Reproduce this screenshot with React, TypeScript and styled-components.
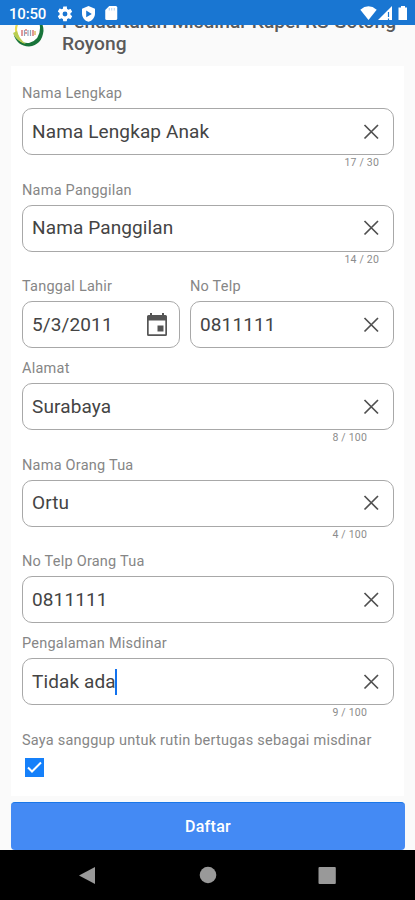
import React from "react";
import styled, { createGlobalStyle } from "styled-components";

const GlobalStyle = createGlobalStyle`
  * { box-sizing: border-box; }
  body { margin: 0; background: #fafafa; font-family: Roboto, "Liberation Sans", sans-serif; }
`;

const Screen = styled.div`
  display: flex;
  flex-direction: column;
  width: 415px;
  height: 900px;
  overflow: hidden;
  background: #fafafa;
`;

const StatusBar = styled.header`
  display: flex;
  flex: none;
  align-items: center;
  justify-content: space-between;
  height: 25px;
  padding: 2px 6px 0 9px;
  background: #1976d2;
  color: #fff;
`;

const StatusGroup = styled.div<{ $gap: number }>`
  display: flex;
  align-items: center;
  gap: ${(p) => p.$gap}px;
  svg { display: block; }
`;

const Clock = styled.span`
  width: 40px;
  font-size: 15px;
  line-height: 20px;
  letter-spacing: -0.2px;
  font-weight: 500;
  white-space: nowrap;
`;

const Heading = styled.div`
  display: flex;
  flex: none;
  align-items: flex-end;
  height: 41px;
  padding: 0 10px 11px 12px;
  overflow: hidden;
`;

const Logo = styled.svg`
  flex: none;
  width: 33px;
  height: 34px;
  margin: 0 17px 8px 0;
`;

const Title = styled.h1`
  margin: 0;
  color: #5a5a5a;
  font-size: 19.2px;
  font-weight: 500;
  line-height: 22px;
  white-space: nowrap;
`;

const Card = styled.main`
  flex: none;
  height: 730px;
  margin: 0 11px;
  padding: 19px 10px 0 11px;
  background: #fff;
`;

const FieldBlock = styled.div<{ $counted?: boolean }>`
  height: ${(p) => (p.$counted ? 96.5 : 82)}px;
`;

const Split = styled.div`
  display: grid;
  grid-template-columns: 158px 1fr;
  gap: 10px;
`;

const Label = styled.label`
  display: block;
  height: 23px;
  color: #868686;
  font-size: 14.5px;
  line-height: 18px;
  letter-spacing: 0.23px;
  white-space: nowrap;
`;

const InputBox = styled.div<{ $date?: boolean }>`
  display: flex;
  align-items: center;
  justify-content: space-between;
  height: 47px;
  padding: 0 ${(p) => (p.$date ? 11 : 14)}px 0 9px;
  border: 1px solid #a8a8a8;
  border-radius: 10px;
  svg { display: block; flex: none; }
`;

const Value = styled.span`
  display: flex;
  align-items: center;
  color: #444;
  font-size: 19px;
  line-height: 26px;
  letter-spacing: 0.12px;
  white-space: pre;
`;

const Caret = styled.i`
  width: 2px;
  height: 26px;
  margin-left: -1px;
  background: #1272ee;
`;

const Counter = styled.div<{ $inset: number }>`
  padding-right: ${(p) => p.$inset}px;
  color: #8c8c8c;
  font-size: 10.5px;
  line-height: 15px;
  letter-spacing: 0.2px;
  text-align: right;
`;

const CheckMark = styled.span`
  display: flex;
  width: 19px;
  height: 19px;
  margin: 3px 0 0 3px;
  background: #1580fa;
`;

const SubmitButton = styled.button`
  flex: none;
  height: 48px;
  margin: 6px 10px 0 11px;
  padding: 0;
  border: 0;
  border-top: 1px solid #1a77e8;
  border-radius: 4px;
  background: #448af4;
  color: #fff;
  font: 500 16px/48px Roboto, "Liberation Sans", sans-serif;
  letter-spacing: 0.3px;
`;

const NavBar = styled.nav`
  flex: none;
  height: 50px;
  background: #000;
  svg { display: block; }
`;

const ClearIcon = () => (
  <svg width="16" height="16" viewBox="0 0 16 16">
    <path d="M1.5 1 15 14.500M15 1 1.500 14.500" stroke="#505050" strokeWidth="1.7" />
  </svg>
);

const CalendarIcon = () => (
  <svg width="22" height="24" viewBox="0 0 22 24">
    <path fill="#555" fillRule="evenodd" d="M4 0h2v2h10V0h2v2h1.5Q21 2 21 3.5v18Q21 23 19.500 23h-17Q1 23 1 21.500v-18Q1 2 2.500 2H4ZM2.700 7.500V21.300h16.600V7.500Z" />
    <path fill="#555" d="M11.500 12.500h6v6h-6z" />
  </svg>
);

interface FieldProps {
  label: string;
  value: string;
  count?: string;
  inset?: number;
  date?: boolean;
  focused?: boolean;
}

const Field = ({ label, value, count, inset = 27, date, focused }: FieldProps) => (
  <FieldBlock $counted={!!count}>
    <Label>{label}</Label>
    <InputBox $date={date}>
      <Value>{value}{focused && <Caret />}</Value>
      {date ? <CalendarIcon /> : <ClearIcon />}
    </InputBox>
    {count && <Counter $inset={inset}>{count}</Counter>}
  </FieldBlock>
);

export default function App() {
  return (
    <Screen>
      <GlobalStyle />
      <StatusBar>
        <StatusGroup $gap={8}>
          <Clock>10:50</Clock>
          <svg width="16" height="16" viewBox="1.500 1.500 21 21"><path fill="#fff" d="M19.14 12.94c.04-.3.06-.61.06-.94s-.02-.64-.07-.94l2.03-1.58a.5.5 0 0 0 .12-.61l-1.92-3.32a.5.5 0 0 0-.59-.22l-2.39.96a7 7 0 0 0-1.62-.94l-.36-2.54A.5.5 0 0 0 13.9 2h-3.8a.5.5 0 0 0-.5.41l-.36 2.54a7 7 0 0 0-1.62.94l-2.39-.96a.5.5 0 0 0-.59.22L2.72 8.47a.5.5 0 0 0 .12.61l2.03 1.58a6 6 0 0 0 0 2.28l-2.03 1.58a.5.5 0 0 0-.12.61l1.92 3.32c.12.22.37.29.59.22l2.39-.96c.5.38 1.03.7 1.62.94l.36 2.54c.05.24.25.41.5.41h3.8c.25 0 .46-.17.5-.41l.36-2.54a7 7 0 0 0 1.62-.94l2.39.96c.22.08.47 0 .59-.22l1.92-3.32a.5.5 0 0 0-.12-.61ZM12 15.2a3.2 3.2 0 1 1 0-6.4 3.200 3.200 0 0 1 0 6.400Z" /></svg>
          <svg width="15" height="16" viewBox="0 0 15 16"><path fill="#fff" fillRule="evenodd" d="M7.5 0 14 2.7v4.7c0 4-2.7 7.2-6.5 8.4C3.7 14.6 1 11.4 1 7.4V2.7ZM5.2 4.5v6.7L10.8 8Z" /></svg>
          <svg width="14" height="15" viewBox="-.5 0 13.500 15"><path fill="#fff" fillRule="evenodd" d="M4.5 0H11q1.5 0 1.5 1.5v11q0 1.5-1.500 1.500H2q-1.500 0-1.500-1.500V4Z" /><path stroke="#1976d2" strokeOpacity=".35" d="M4.500 2v2.500M7 2v2.500M9.500 2v2.500" /></svg>
        </StatusGroup>
        <StatusGroup $gap={1}>
          <svg width="17" height="15" viewBox="0 0 17 15"><path fill="#fff" d="M.3 3.7Q8.5-3 16.7 3.7L8.5 14Z" /></svg>
          <svg width="15" height="15" viewBox="0 0 15 15"><path fill="#fff" d="M14 0v14H0Z" /><path stroke="#1976d2" strokeWidth="1.2" d="M10.500 6v5M10.500 12.500v1.500" /></svg>
          <svg width="15" height="15" viewBox="0 0 15 15"><path fill="#fff" d="M7 0h4v1.500h2V14H4.500V1.500H7Z" /></svg>
        </StatusGroup>
      </StatusBar>
      <Heading>
        <Logo viewBox="0 0 33 34">
          <circle cx="16" cy="17" r="14" fill="#fff" />
          <path d="M6 24A14 14 0 0 1 7 8" fill="none" stroke="#eadb55" strokeWidth="2.200" />
          <path d="M1.500 21Q7 31 17 30Q28 27 28 15Q28 8 22 4Q31.500 7 31.500 18Q30 32 17 33.500Q5 33 1.500 21Z" fill="#18743a" />
          <path d="M1 20Q5 29 14 31Q7 26 5 18Z" fill="#b9cd50" />
          <path d="M10 17v6M13 17h2M13 20h2M21 17v6" stroke="#d77a79" strokeWidth="1.500" />
          <path d="M12.500 17v6M16 17v6M18.500 17v6" stroke="#91a4bd" strokeWidth="1.200" />
          <path d="M23 18v4" stroke="#dfb862" strokeWidth="1.500" />
        </Logo>
        <Title>Pendaftaran Misdinar Kapel RS Gotong<br />Royong</Title>
      </Heading>
      <Card>
        <Field label="Nama Lengkap" value="Nama Lengkap Anak" count="17 / 30" inset={15} />
        <Field label="Nama Panggilan" value="Nama Panggilan" count="14 / 20" inset={15} />
        <Split>
          <Field label="Tanggal Lahir" value="5/3/2011" date />
          <Field label="No Telp" value="0811111" />
        </Split>
        <Field label="Alamat" value="Surabaya" count="8 / 100" />
        <Field label="Nama Orang Tua" value="Ortu" count="4 / 100" />
        <Field label="No Telp Orang Tua" value="0811111" />
        <Field label="Pengalaman Misdinar" value="Tidak ada" count="9 / 100" focused />
        <Label>Saya sanggup untuk rutin bertugas sebagai misdinar</Label>
        <CheckMark>
          <svg width="19" height="19" viewBox="0 0 19 19"><path d="m3 9.500 4 4 9-9" fill="none" stroke="#fff" strokeWidth="2" /></svg>
        </CheckMark>
      </Card>
      <SubmitButton>Daftar</SubmitButton>
      <NavBar>
        <svg width="415" height="50" viewBox="0 0 415 50" fill="#999">
          <path d="M79 25.500 95 17v17Z" />
          <circle cx="208" cy="25" r="8.300" />
          <rect x="318.500" y="17" width="17.300" height="17" rx="1" />
        </svg>
      </NavBar>
    </Screen>
  );
}
